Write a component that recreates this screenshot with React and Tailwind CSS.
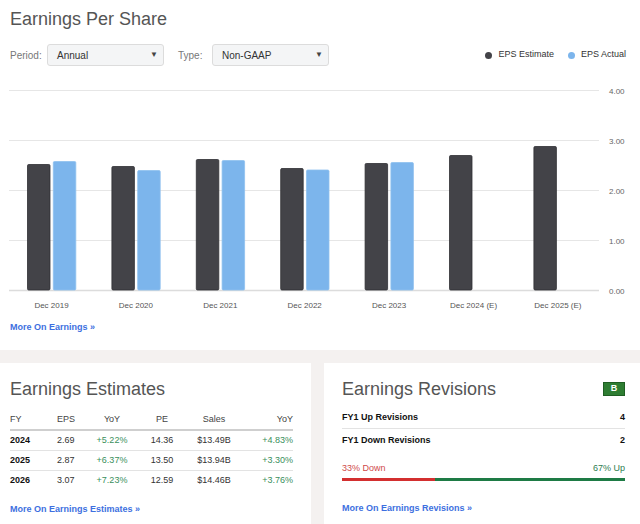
import React from "react";

const FONT = { fontFamily: '"Liberation Sans", Arial, sans-serif' };

const years = ["Dec 2019", "Dec 2020", "Dec 2021", "Dec 2022", "Dec 2023", "Dec 2024 (E)", "Dec 2025 (E)"];
const est = [2.51, 2.47, 2.61, 2.43, 2.53, 2.69, 2.87];
const act = [2.57, 2.39, 2.59, 2.4, 2.55, null, null];

function Chart() {
  const y0 = 290;
  const scale = 50;
  return (
    <svg width="640" height="250" viewBox="0 66 640 250" className="block">
      {[0, 1, 2, 3, 4].map((v) => (
        <g key={v}>
          <line x1="9" x2="599" y1={y0 - v * scale + 0.5} y2={y0 - v * scale + 0.5} stroke={v === 0 ? "#dcdcdc" : "#e6e6e6"} strokeWidth={v === 0 ? 1.5 : 1} />
          <text x="609" y={y0 - v * scale + 3.5} fontSize="8" fill="#666" style={FONT}>
            {v.toFixed(2)}
          </text>
        </g>
      ))}
      {years.map((label, i) => {
        const c = 51.5 + i * 84.4;
        const eh = est[i] * scale;
        const a = act[i];
        return (
          <g key={label}>
            <rect x={c - 24} y={y0 - eh} width="22.5" height={eh} rx="1.2" fill="#434348" stroke="#2f2f33" strokeWidth="0.8" />
            {a !== null && (
              <rect x={c + 1.8} y={y0 - a * scale} width="22.5" height={a * scale} rx="1.2" fill="#7cb5ec" stroke="#8ec0ef" strokeWidth="0.8" />
            )}
            <text x={c} y="308" fontSize="8" fill="#555" textAnchor="middle" style={FONT}>
              {label}
            </text>
          </g>
        );
      })}
    </svg>
  );
}

function Select({ value, width }) {
  return (
    <div className={`flex items-center justify-between h-[22px] ${width} bg-[#f4f5f6] border border-[#dcdcdc] rounded-[3px] pl-[9px] pr-[5px]`}>
      <span className="text-[10px] text-[#333]">{value}</span>
      <span className="text-[8px] text-[#444]">▼</span>
    </div>
  );
}

const rows = [
  ["2024", "2.69", "+5.22%", "14.36", "$13.49B", "+4.83%"],
  ["2025", "2.87", "+6.37%", "13.50", "$13.94B", "+3.30%"],
  ["2026", "3.07", "+7.23%", "12.59", "$14.46B", "+3.76%"],
];

const GRID = "grid grid-cols-[47px_33px_44px_56px_48px_55px] items-center";

export default function App() {
  return (
    <div className="w-[640px] h-[524px] overflow-hidden bg-white" style={FONT}>
      {/* EPS section */}
      <div className="h-[350px] bg-white">
        <div className="pt-[8px] pl-[10px] text-[18px] leading-[22px] text-[#555]">Earnings Per Share</div>
        <div className="mt-[14px] flex items-center pl-[10px] pr-[14px]">
          <span className="text-[10px] text-[#777] w-[37px]">Period:</span>
          <Select value="Annual" width="w-[117px]" />
          <span className="text-[10px] text-[#777] ml-[14px] w-[34px]">Type:</span>
          <Select value="Non-GAAP" width="w-[117px]" />
          <div className="ml-auto flex items-center text-[9px] text-[#333]">
            <span className="w-[7px] h-[7px] rounded-full bg-[#434348] mr-[6px]"></span>
            <span>EPS Estimate</span>
            <span className="w-[7px] h-[7px] rounded-full bg-[#7cb5ec] ml-[14px] mr-[6px]"></span>
            <span>EPS Actual</span>
          </div>
        </div>
        <Chart />
        <div className="mt-[5px] pl-[10px] text-[9px] leading-[12px] font-bold text-[#3d6fe0]">More On Earnings »</div>
      </div>

      {/* Bottom */}
      <div className="bg-[#f4f1f0] pt-[13px] flex gap-[13px] h-[174px]">
        <div className="w-[311px] bg-white pl-[10px]">
          <div className="pt-[15px] text-[18px] leading-[22px] text-[#555]">Earnings Estimates</div>
          <div className="mt-[11px] w-[283px] text-[9px] text-[#333]">
            <div className={`${GRID} h-[20px] border-b-2 border-[#cfcfcf] text-[#444]`}>
              <span>FY</span>
              <span>EPS</span>
              <span className="text-center">YoY</span>
              <span className="text-center">PE</span>
              <span className="text-center">Sales</span>
              <span className="text-right">YoY</span>
            </div>
            {rows.map((r, i) => (
              <div key={r[0]} className={`${GRID} h-[20px] ${i < 2 ? "border-b border-[#e3e3e3]" : ""}`}>
                <span className="font-bold text-[#111]">{r[0]}</span>
                <span>{r[1]}</span>
                <span className="text-center text-[#3a8f5c]">{r[2]}</span>
                <span className="text-center">{r[3]}</span>
                <span className="text-center">{r[4]}</span>
                <span className="text-right text-[#3a8f5c]">{r[5]}</span>
              </div>
            ))}
          </div>
          <div className="mt-[12px] text-[9px] leading-[12px] font-bold text-[#3d6fe0]">More On Earnings Estimates »</div>
        </div>

        <div className="flex-1 bg-white pl-[18px] pr-[15px]">
          <div className="pt-[15px] flex items-center justify-between">
            <span className="text-[18px] leading-[22px] text-[#555]">Earnings Revisions</span>
            <span className="w-[22px] h-[14px] bg-[#2e7d32] border border-[#1f5e23] text-white text-[9px] font-bold flex items-center justify-center">B</span>
          </div>
          <div className="mt-[7px] h-[22px] flex items-center justify-between border-b border-[#e3e3e3] text-[9px] font-bold text-[#111]">
            <span>FY1 Up Revisions</span>
            <span>4</span>
          </div>
          <div className="h-[23px] flex items-center justify-between text-[9px] font-bold text-[#111]">
            <span>FY1 Down Revisions</span>
            <span>2</span>
          </div>
          <div className="mt-[11px] h-[12px] flex items-center justify-between text-[9px]">
            <span className="text-[#d04a4a]">33% Down</span>
            <span className="text-[#2e7d4f]">67% Up</span>
          </div>
          <div className="mt-[3px] h-[3px] flex">
            <div className="w-[33%] bg-[#d32f2f]"></div>
            <div className="flex-1 bg-[#1e7b45]"></div>
          </div>
          <div className="mt-[21px] text-[9px] leading-[12px] font-bold text-[#3d6fe0]">More On Earnings Revisions »</div>
        </div>
      </div>
    </div>
  );
}
